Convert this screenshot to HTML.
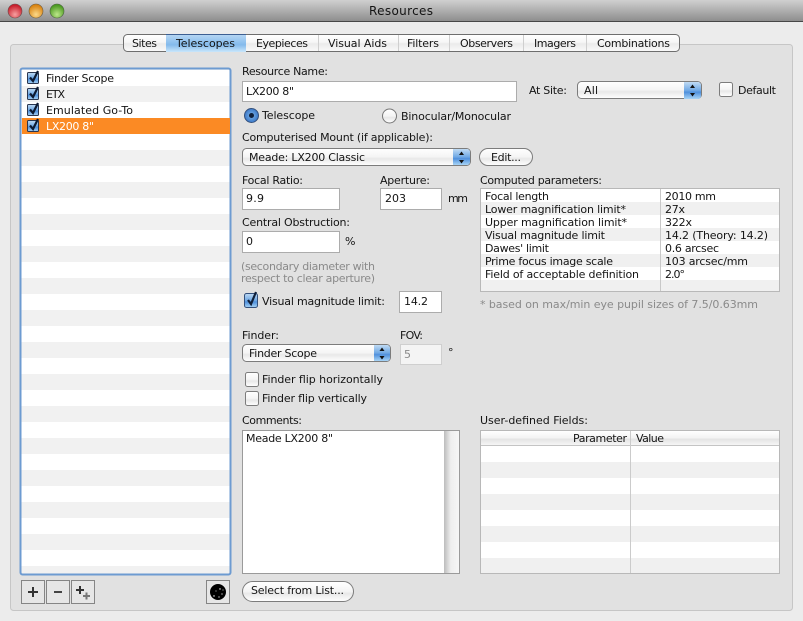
<!DOCTYPE html>
<html><head><meta charset="utf-8"><title>Resources</title>
<style>
html,body{margin:0;padding:0;background:#ececec;width:803px;height:621px;overflow:hidden}
svg{display:block;filter:blur(.25px)}
text{font-family:"DejaVu Sans",sans-serif;font-size:11px;fill:#141414}
.g{fill:#8a8a8a}
.f{fill:#fff;stroke:#acacac;stroke-width:1}
.c{fill:url(#btn);stroke:#7c7c7c;stroke-width:1}
</style></head><body>
<svg width="803" height="621" viewBox="0 0 803 621" xmlns="http://www.w3.org/2000/svg">
<defs>
<linearGradient id="title" x1="0" y1="0" x2="0" y2="1"><stop offset="0" stop-color="#d0d0d0"/><stop offset="1" stop-color="#8e8e8e"/></linearGradient>
<linearGradient id="tab" x1="0" y1="0" x2="0" y2="1"><stop offset="0" stop-color="#fff"/><stop offset=".45" stop-color="#f6f6f6"/><stop offset=".55" stop-color="#ebebeb"/><stop offset="1" stop-color="#fafafa"/></linearGradient>
<linearGradient id="tabsel" x1="0" y1="0" x2="0" y2="1"><stop offset="0" stop-color="#b9d8f3"/><stop offset=".5" stop-color="#8cc0ee"/><stop offset=".6" stop-color="#84baeb"/><stop offset="1" stop-color="#c9e6fb"/></linearGradient>
<linearGradient id="btn" x1="0" y1="0" x2="0" y2="1"><stop offset="0" stop-color="#fff"/><stop offset=".5" stop-color="#f4f4f4"/><stop offset=".6" stop-color="#e8e8e8"/><stop offset="1" stop-color="#fff"/></linearGradient>
<linearGradient id="blue" x1="0" y1="0" x2="0" y2="1"><stop offset="0" stop-color="#c0dbf4"/><stop offset=".5" stop-color="#6fa8e4"/><stop offset=".6" stop-color="#4f90dc"/><stop offset="1" stop-color="#a8d4f6"/></linearGradient>
<linearGradient id="scroll" x1="0" y1="0" x2="1" y2="0"><stop offset="0" stop-color="#bcbcbc"/><stop offset=".45" stop-color="#eeeeee"/><stop offset="1" stop-color="#f6f6f6"/></linearGradient>
<linearGradient id="hdr" x1="0" y1="0" x2="0" y2="1"><stop offset="0" stop-color="#fff"/><stop offset=".45" stop-color="#f3f3f3"/><stop offset=".55" stop-color="#e4e4e4"/><stop offset="1" stop-color="#f8f8f8"/></linearGradient>
<radialGradient id="red" cx=".5" cy=".75" r=".65"><stop offset="0" stop-color="#f7a0a0"/><stop offset="1" stop-color="#c81e2c"/></radialGradient>
<radialGradient id="yel" cx=".5" cy=".75" r=".65"><stop offset="0" stop-color="#fbd98a"/><stop offset="1" stop-color="#d98412"/></radialGradient>
<radialGradient id="grn" cx=".5" cy=".75" r=".65"><stop offset="0" stop-color="#bde88a"/><stop offset="1" stop-color="#4d9a22"/></radialGradient>
<radialGradient id="rad" cx=".5" cy=".5" r=".5"><stop offset="0" stop-color="#7fb6ea"/><stop offset="1" stop-color="#3a78c8"/></radialGradient>
<pattern id="st" x="0" y="70" width="10" height="32" patternUnits="userSpaceOnUse"><rect width="10" height="16" y="0" fill="#fff"/><rect width="10" height="16" y="16" fill="#f1f1f1"/></pattern>
<pattern id="st2" x="0" y="446" width="10" height="32" patternUnits="userSpaceOnUse"><rect width="10" height="16" y="0" fill="#fff"/><rect width="10" height="16" y="16" fill="#f0f0f0"/></pattern>
<pattern id="st3" x="0" y="189" width="10" height="26" patternUnits="userSpaceOnUse"><rect width="10" height="13" y="0" fill="#fff"/><rect width="10" height="13" y="13" fill="#f0f0f0"/></pattern>
</defs>

<!-- window -->
<rect width="803" height="621" fill="#ececec"/>
<rect width="803" height="21" fill="url(#title)"/>
<rect y="21" width="803" height="1" fill="#474747"/>
<circle cx="15" cy="11" r="7" fill="url(#red)" stroke="#6a4a4a" stroke-width=".6"/>
<circle cx="36" cy="11" r="7" fill="url(#yel)" stroke="#6a5a40" stroke-width=".6"/>
<circle cx="57" cy="11" r="7" fill="url(#grn)" stroke="#4a6040" stroke-width=".6"/>
<text x="369" y="15" textLength="64" style="font-size:12px">Resources</text>

<!-- panel -->
<rect x="10.5" y="44.5" width="782" height="566" rx="3" fill="#e1e1e1" stroke="#c6c6c6"/>

<!-- tabs -->
<rect x="123.5" y="34.5" width="556" height="17" rx="4" fill="url(#tab)" stroke="#6e6e6e"/>
<rect x="166" y="34" width="80" height="18" fill="url(#tabsel)"/>
<rect x="166" y="34" width="80" height="1" fill="#3d5f92"/>
<g fill="#cfcfcf"><rect x="318" y="35" width="1" height="16"/><rect x="398" y="35" width="1" height="16"/><rect x="449" y="35" width="1" height="16"/><rect x="523" y="35" width="1" height="16"/><rect x="586" y="35" width="1" height="16"/></g>
<text x="132" y="47" textLength="25">Sites</text>
<text x="176" y="47" textLength="59">Telescopes</text>
<text x="256" y="47" textLength="52">Eyepieces</text>
<text x="328" y="47" textLength="59">Visual Aids</text>
<text x="407" y="47" textLength="32">Filters</text>
<text x="460" y="47" textLength="53">Observers</text>
<text x="534" y="47" textLength="42">Imagers</text>
<text x="597" y="47" textLength="73">Combinations</text>

<!-- list -->
<rect x="20.5" y="68.5" width="210" height="506" rx="2" fill="url(#st)" stroke="#6d9bd1" stroke-width="2"/>
<rect x="22" y="118" width="208" height="16" fill="#fb8a24"/>
<rect x="27.5" y="72.500" width="11" height="11" rx="1" fill="url(#blue)" stroke="#2a3650"/>
<path d="M30 77.500l3 3.500 5-10" fill="none" stroke="#0c1a32" stroke-width="2.200"/>
<rect x="27.5" y="88.500" width="11" height="11" rx="1" fill="url(#blue)" stroke="#2a3650"/>
<path d="M30 93.500l3 3.500 5-10" fill="none" stroke="#0c1a32" stroke-width="2.200"/>
<rect x="27.5" y="104.500" width="11" height="11" rx="1" fill="url(#blue)" stroke="#2a3650"/>
<path d="M30 109.500l3 3.500 5-10" fill="none" stroke="#0c1a32" stroke-width="2.200"/>
<rect x="27.5" y="120.500" width="11" height="11" rx="1" fill="url(#blue)" stroke="#2a3650"/>
<path d="M30 125.500l3 3.500 5-10" fill="none" stroke="#0c1a32" stroke-width="2.200"/>
<text x="46" y="82" textLength="68">Finder Scope</text>
<text x="46" y="98" textLength="19">ETX</text>
<text x="46" y="114" textLength="87">Emulated Go-To</text>
<text x="46" y="130" textLength="48" style="fill:#fff">LX200 8"</text>

<!-- bottom buttons -->
<g fill="#e6e6e6" stroke="#858585">
<rect x="21.500" y="580.500" width="23" height="23"/>
<rect x="46.500" y="580.500" width="23" height="23"/>
<rect x="71.500" y="580.500" width="23" height="23"/>
<rect x="206.500" y="580.500" width="23" height="23"/>
</g>
<path d="M28 592h10M33 587v10" stroke="#333" stroke-width="2"/>
<path d="M54 592h8" stroke="#444" stroke-width="2"/>
<path d="M76 590h8M80 586v8" stroke="#333" stroke-width="2"/>
<path d="M83 596h7M86.500 592.500v7" stroke="#777" stroke-width="2"/>
<circle cx="218" cy="592" r="8" fill="#000"/>
<g fill="#fff"><circle cx="214" cy="596" r=".7"/><circle cx="220" cy="589" r=".7"/><circle cx="222" cy="594" r=".6"/><circle cx="216" cy="591" r=".5"/><circle cx="219" cy="597" r=".6"/><circle cx="223" cy="590" r=".5"/></g>
<rect x="242.500" y="581.500" width="111" height="20" rx="10" class="c"/>
<text x="251" y="594" textLength="93">Select from List...</text>

<!-- top form -->
<text x="242" y="75" textLength="86">Resource Name:</text>
<rect x="242.500" y="81.500" width="274" height="20" class="f"/>
<text x="246" y="95" textLength="48">LX200 8"</text>
<text x="529" y="94" textLength="38">At Site:</text>
<rect x="577.500" y="81.500" width="124" height="17" rx="4" class="c"/>
<path d="M684 82h14a3 3 0 0 1 3 3v11a3 3 0 0 1-3 3h-14z" fill="url(#blue)"/>
<path d="M690 88l2.500-3.500 2.500 3.500zM690 93l2.500 3.500 2.500-3.500z" fill="#111"/>
<text x="584" y="94" textLength="14">All</text>
<rect x="719.500" y="82.500" width="13" height="14" rx="2" class="c"/>
<text x="738" y="94" textLength="38">Default</text>

<circle cx="251.500" cy="115.500" r="7" fill="url(#rad)" stroke="#33507c"/>
<circle cx="251.500" cy="115.500" r="2.500" fill="#10203a"/>
<text x="262" y="119" textLength="53">Telescope</text>
<circle cx="389.500" cy="116" r="7" fill="url(#btn)" stroke="#777"/>
<text x="401" y="120" textLength="110">Binocular/Monocular</text>

<text x="242" y="141" textLength="191">Computerised Mount (if applicable):</text>
<rect x="242.500" y="148.500" width="228" height="17" rx="4" class="c"/>
<path d="M453 149h14a3 3 0 0 1 3 3v10a3 3 0 0 1-3 3h-14z" fill="url(#blue)"/>
<path d="M459 155l2.500-3.500 2.500 3.500zM459 160l2.500 3.500 2.500-3.500z" fill="#111"/>
<text x="249" y="161" textLength="116">Meade: LX200 Classic</text>
<rect x="479.500" y="148.500" width="53" height="17" rx="8.500" class="c"/>
<text x="491" y="161" textLength="30">Edit...</text>

<text x="242" y="184" textLength="61">Focal Ratio:</text>
<text x="380" y="184" textLength="50">Aperture:</text>
<rect x="242.500" y="188.500" width="97" height="21" class="f"/>
<text x="246" y="202" textLength="18">9.9</text>
<rect x="380.500" y="188.500" width="61" height="21" class="f"/>
<text x="385" y="202" textLength="21">203</text>
<text x="448" y="202" textLength="20">mm</text>
<text x="242" y="226" textLength="108">Central Obstruction:</text>
<rect x="242.500" y="231.500" width="97" height="21" class="f"/>
<text x="246" y="245" textLength="7">0</text>
<text x="345" y="245" textLength="8">%</text>
<text class="g" x="241" y="270" textLength="134">(secondary diameter with</text>
<text class="g" x="241" y="282" textLength="134">respect to clear aperture)</text>

<rect x="244.500" y="293.500" width="13" height="14" rx="2" fill="url(#blue)" stroke="#33507c"/>
<path d="M248 300l3 4 5-12" fill="none" stroke="#10203a" stroke-width="2.200"/>
<text x="262" y="305" textLength="123">Visual magnitude limit:</text>
<rect x="399.500" y="291.500" width="42" height="21" class="f"/>
<text x="404" y="305" textLength="24">14.2</text>

<text x="242" y="339" textLength="37">Finder:</text>
<text x="400" y="339" textLength="23">FOV:</text>
<rect x="242.500" y="344.500" width="148" height="17" rx="4" class="c"/>
<path d="M374 345h13a3 3 0 0 1 3 3v10a3 3 0 0 1-3 3h-13z" fill="url(#blue)"/>
<path d="M379.500 351l2.500-3.500 2.500 3.500zM379.500 356l2.500 3.500 2.500-3.500z" fill="#111"/>
<text x="249" y="357" textLength="68">Finder Scope</text>
<rect x="400.500" y="344.500" width="41" height="20" fill="#f4f4f4" stroke="#cfcfcf"/>
<text class="g" x="404" y="358" textLength="7">5</text>
<text x="448" y="356" textLength="5">°</text>
<rect x="245.500" y="372.500" width="13" height="14" rx="2" class="c"/>
<text x="262" y="383" textLength="121">Finder flip horizontally</text>
<rect x="245.500" y="391.500" width="13" height="14" rx="2" class="c"/>
<text x="262" y="402" textLength="105">Finder flip vertically</text>

<!-- comments -->
<text x="242" y="424" textLength="60">Comments:</text>
<rect x="242.500" y="430.500" width="217" height="143" fill="#fff" stroke="#9a9a9a"/>
<rect x="444" y="431" width="15" height="142" fill="url(#scroll)"/>
<text x="246" y="442" textLength="87">Meade LX200 8"</text>

<!-- computed -->
<text x="480" y="184" textLength="122">Computed parameters:</text>
<rect x="480.500" y="188.500" width="299" height="103" fill="url(#st3)" stroke="#b8b8b8"/>
<rect x="660" y="189" width="1" height="102" fill="#c8c8c8"/>
<text x="485" y="200" textLength="64">Focal length</text>
<text x="485" y="213" textLength="141">Lower magnification limit*</text>
<text x="485" y="226" textLength="142">Upper magnification limit*</text>
<text x="485" y="239" textLength="120">Visual magnitude limit</text>
<text x="485" y="252" textLength="64">Dawes' limit</text>
<text x="485" y="265" textLength="128">Prime focus image scale</text>
<text x="485" y="278" textLength="154">Field of acceptable definition</text>
<text x="665" y="200" textLength="51">2010 mm</text>
<text x="665" y="213" textLength="20">27x</text>
<text x="665" y="226" textLength="27">322x</text>
<text x="665" y="239" textLength="103">14.2 (Theory: 14.2)</text>
<text x="665" y="252" textLength="54">0.6 arcsec</text>
<text x="665" y="265" textLength="83">103 arcsec/mm</text>
<text x="665" y="278" textLength="20">2.0°</text>
<text class="g" x="480" y="308" textLength="278">* based on max/min eye pupil sizes of 7.5/0.63mm</text>

<!-- user-defined -->
<text x="480" y="424" textLength="108">User-defined Fields:</text>
<rect x="480.500" y="430.500" width="299" height="143" fill="url(#st2)" stroke="#b8b8b8"/>
<rect x="481" y="431" width="298" height="15" fill="url(#hdr)"/>
<rect x="481" y="445" width="298" height="1" fill="#c4c4c4"/>
<rect x="630" y="431" width="1" height="142" fill="#cbcbcb"/>
<text x="573" y="442" textLength="54">Parameter</text>
<text x="636" y="442" textLength="28">Value</text>
</svg>
</body></html>
